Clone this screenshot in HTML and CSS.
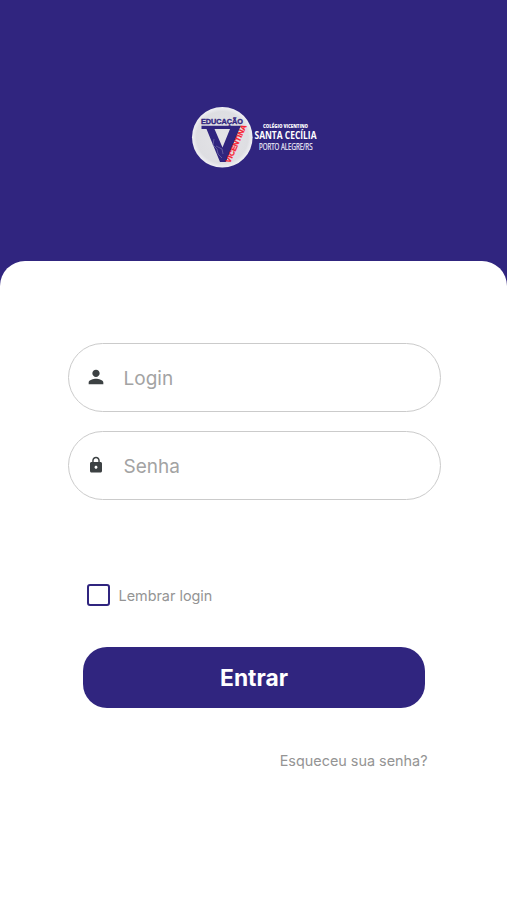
FILE: index.html
```html
<!DOCTYPE html>
<html lang="pt-BR">
<head>
<meta charset="utf-8">
<meta name="viewport" content="width=device-width, initial-scale=1">
<title>Login</title>
<link rel="stylesheet" href="styles.css">
</head>
<body>
<main class="screen">
  <header class="hero">
    <svg class="logo" width="140" height="64" viewBox="190 105 140 64">
      <defs>
        <radialGradient id="disc">
          <stop offset="0" stop-color="#e4e4e7"/>
          <stop offset="0.85" stop-color="#dedee2"/>
          <stop offset="1" stop-color="#f0f0f4"/>
        </radialGradient>
      </defs>
      <circle cx="222.3" cy="137.3" r="30.3" fill="url(#disc)"/>
      <path d="M201.500 125.800h39.500l-1.500 3-13.500 33.200h-6l-13.500-33h-5zM214.500 129l8 18.500 7.500-18.500z" fill="#30257f" fill-rule="evenodd"/>
      <path d="M214 139l-1 6 4 4 1 5 4 4M216 146l6 3 1 5" fill="none" stroke="#7770aa" stroke-width=".7"/>
      <text class="badge-name" x="201" y="124.2" textLength="42" lengthAdjust="spacingAndGlyphs">EDUCAÇÃO</text>
      <text class="badge-side" transform="translate(230 163.400) rotate(-66)" textLength="41" lengthAdjust="spacingAndGlyphs">VICENTINA</text>
      <text class="school-kind" x="263" y="127.500" textLength="45" lengthAdjust="spacingAndGlyphs">COLÉGIO VICENTINO</text>
      <text class="school-name" x="254.500" y="139" textLength="62" lengthAdjust="spacingAndGlyphs">SANTA CECÍLIA</text>
      <text class="school-city" x="259" y="150.300" textLength="53.500" lengthAdjust="spacingAndGlyphs">PORTO ALEGRE/RS</text>
    </svg>
  </header>
  <form class="sheet">
    <div class="field">
      <svg class="icon" width="22" height="22" viewBox="0 0 24 24"><path d="M12 12c2.210 0 4-1.790 4-4s-1.790-4-4-4-4 1.790-4 4 1.790 4 4 4zm0 2c-2.670 0-8 1.340-8 4v2h16v-2c0-2.660-5.330-4-8-4z"/></svg>
      <input class="input" type="text" placeholder="Login" aria-label="Login">
    </div>
    <div class="field">
      <svg class="icon icon-lock" width="18" height="18" viewBox="0 0 24 24"><path d="M18 8h-1V6c0-2.760-2.240-5-5-5S7 3.240 7 6v2H6c-1.100 0-2 .9-2 2v10c0 1.100.9 2 2 2h12c1.100 0 2-.9 2-2V10c0-1.100-.9-2-2-2zm-6 9c-1.100 0-2-.9-2-2s.9-2 2-2 2 .9 2 2-.9 2-2 2zm3.100-9H8.900V6c0-1.710 1.390-3.100 3.100-3.100s3.100 1.390 3.100 3.100v2z"/></svg>
      <input class="input" type="password" placeholder="Senha" aria-label="Senha">
    </div>
    <label class="remember"><input class="check" type="checkbox"><span class="remember-text">Lembrar login</span></label>
    <button class="submit" type="button">Entrar</button>
    <a class="forgot">Esqueceu sua senha?</a>
  </form>
</main>
</body>
</html>
```
FILE: styles.css
```css
* { box-sizing: border-box; }
body {
  margin: 0;
  background: #30257f;
  font-family: Inter, "Liberation Sans", sans-serif;
}
.screen {
  display: flex;
  flex-direction: column;
  height: 900px;
}
.hero {
  height: 261px;
  padding: 105px 0 0 190px;
}
.logo { display: block; overflow: visible; }
.badge-name, .badge-side { font-family: "Liberation Sans", sans-serif; font-weight: 700; }
.badge-name { font-size: 7.500px; fill: #30257f; stroke: #30257f; stroke-width: .4px; }
.badge-side { font-size: 7.500px; fill: #f81c30; stroke: #f81c30; stroke-width: .3px; }
.school-kind, .school-name, .school-city { font-family: "Open Sans", sans-serif; fill: #fff; }
.school-kind { font-size: 5.500px; font-weight: 800; }
.school-name { font-size: 10.500px; font-weight: 700; }
.school-city { font-size: 9px; font-weight: 500; fill: #f0eefa; stroke: #f0eefa; stroke-width: .2px; }
.sheet {
  flex: 1;
  display: flex;
  flex-direction: column;
  padding: 82px 66px 0 67.500px;
  background: #fff;
  border-radius: 25px 25px 0 0;
}
.field {
  display: flex;
  align-items: center;
  height: 69px;
  margin-bottom: 19px;
  padding-left: 16.500px;
  border: 1.500px solid #cbcbcb;
  border-radius: 35px;
}
.icon { flex: none; margin-top: -1px; fill: #3c4143; }
.icon-lock { margin: -1px 2px 0; }
.input {
  flex: 1;
  min-width: 0;
  margin-left: 16.500px;
  padding: 2px 0 0;
  border: 0;
  outline: 0;
  background: none;
  font: 400 19px Inter, sans-serif;
}
.input::placeholder { color: #a3a3a3; opacity: 1; }
.remember {
  display: flex;
  align-items: center;
  gap: 8.500px;
  margin: 65px 0 0 19.500px;
  color: #949494;
  font-size: 14.400px;
  line-height: 22px;
}
.check {
  appearance: none;
  width: 23px;
  height: 22px;
  margin: 0;
  border: 2px solid #30257f;
  border-radius: 3px;
}
.remember-text { margin: 1px 0 -1px; }
.submit {
  height: 61px;
  margin: 41px 16px 0 15.500px;
  padding: 0;
  border: 0;
  border-radius: 24px;
  background: #30257f;
  color: #fff;
  font: 700 22.800px Inter, sans-serif;
}
.forgot {
  align-self: flex-end;
  margin: 42px 13.500px 0 0;
  color: #949494;
  font-size: 14.400px;
  line-height: 22px;
}
```
